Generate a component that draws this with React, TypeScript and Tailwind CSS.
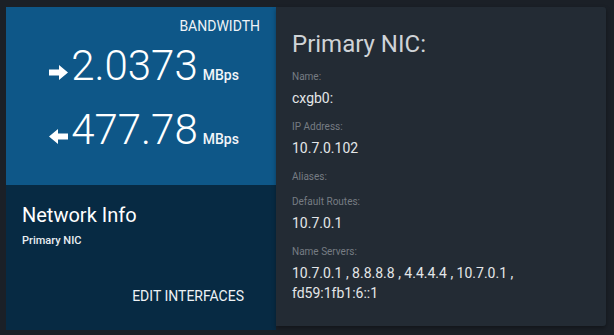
import React from 'react'

function Arrow({ dir }: { dir: 'in' | 'out' }) {
  return (
    <svg
      width="19"
      height="15"
      viewBox="0 0 19 15"
      className={`mb-[2px] shrink-0 ${dir === 'in' ? 'rotate-180' : ''}`}
    >
      <polygon points="0,4.5 10,4.5 10,0 19,7.5 10,15 10,10.5 0,10.5" fill="#ffffff" />
    </svg>
  )
}

function Rate({ dir, value }: { dir: 'in' | 'out'; value: string }) {
  return (
    <div className="flex items-baseline justify-center pl-[6px]">
      <Arrow dir={dir} />
      <span className="ml-[3px] text-[42px] leading-[50px] font-light text-white">{value}</span>
      <span className="ml-[5px] text-sm font-medium text-[#f2f5f8]">MBps</span>
    </div>
  )
}

function Field({ label, value }: { label: string; value?: string }) {
  return (
    <div className="mb-[13px]">
      <p className="text-[10px] leading-[12px] text-[#767c83]">{label}</p>
      <p className="mt-[5px] text-sm leading-5 text-[#e3e6e8]">{value}</p>
    </div>
  )
}

export default function App() {
  return (
    <div className="w-[614px] h-[335px] bg-[#1b2027] pt-[7px] pl-[6px] font-[Roboto,sans-serif] overflow-hidden">
      <div className="flex items-start">
        {/* left: bandwidth + network info */}
        <div className="w-[270px] h-[323px] flex flex-col">
          <div className="h-[178px] bg-[#0e5788] pt-[9px] px-4">
            <p className="text-right text-sm leading-5 text-[#eef3f7]">BANDWIDTH</p>
            <div className="mt-[5px] flex flex-col gap-[14px]">
              <Rate dir="out" value="2.0373" />
              <Rate dir="in" value="477.78" />
            </div>
          </div>
          <div className="flex-1 bg-[#072a43] pt-4 px-4 flex flex-col">
            <h2 className="text-xl leading-7 text-white">Network Info</h2>
            <p className="mt-[4px] text-[11px] leading-4 font-medium text-[#e9eef2]">Primary NIC</p>
            <div className="mt-[37px] flex justify-end pr-4">
              <span className="text-sm leading-5 text-[#eef2f5]">EDIT INTERFACES</span>
            </div>
          </div>
        </div>

        {/* right: primary nic details */}
        <div className="w-[330px] h-[319px] bg-[#232b34] rounded-r-[3px] shadow-[0_2px_4px_rgba(0,0,0,0.35)] pt-[21px] pl-4 pr-4">
          <h1 className="text-2xl leading-8 text-[#cfd3d7]">Primary NIC:</h1>
          <div className="mt-[11px]">
            <Field label="Name:" value="cxgb0:" />
            <Field label="IP Address:" value="10.7.0.102" />
            <Field label="Aliases:" />
            <Field label="Default Routes:" value="10.7.0.1" />
            <Field label="Name Servers:" value="10.7.0.1 , 8.8.8.8 , 4.4.4.4 , 10.7.0.1 , fd59:1fb1:6::1" />
          </div>
        </div>
      </div>
    </div>
  )
}
